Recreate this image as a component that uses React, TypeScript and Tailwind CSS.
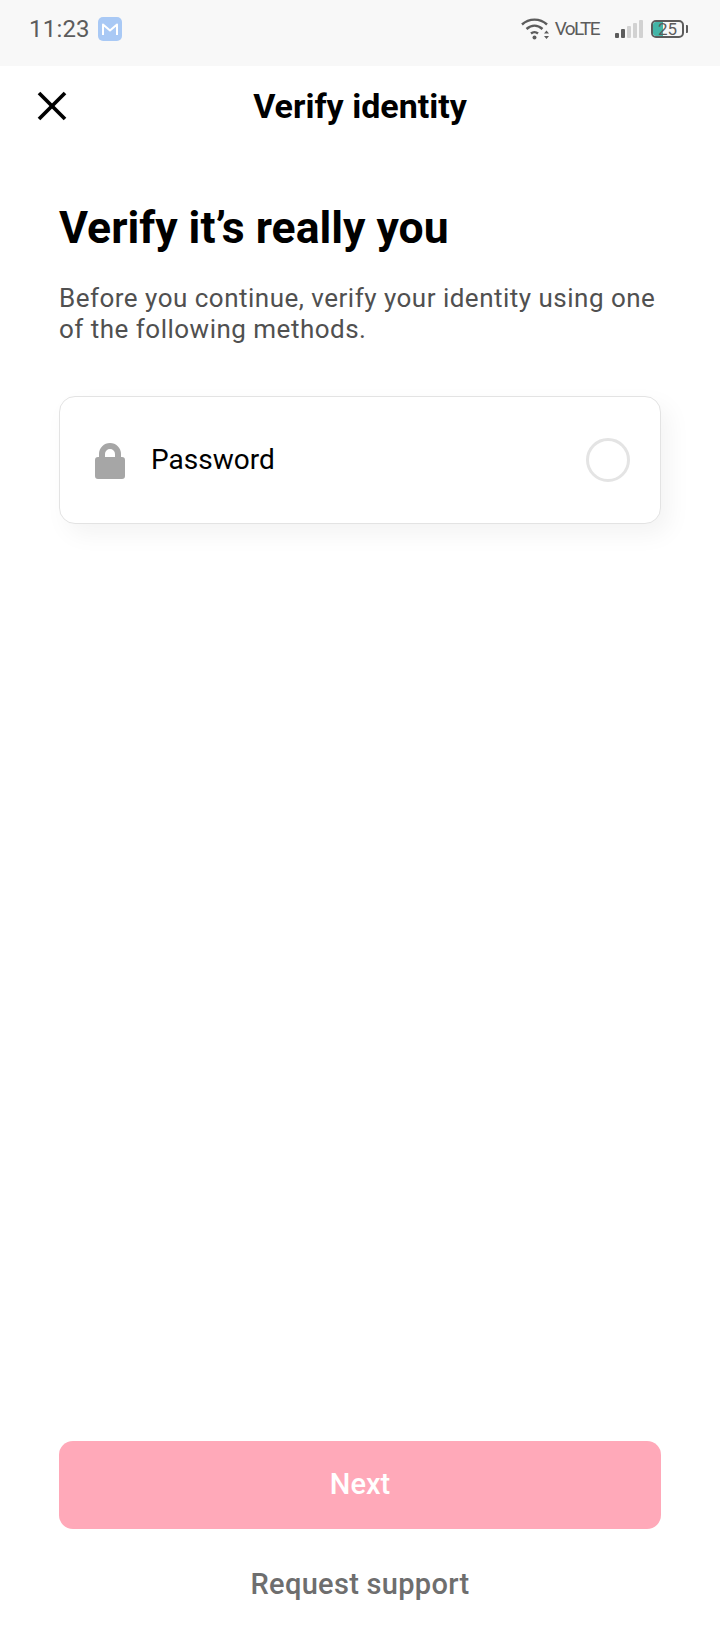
import { X } from 'lucide-react';

function StatusBar() {
  return (
    <div className="flex h-[66px] items-start justify-between bg-[#f8f8f8] pl-[29px] pr-[32px] pt-[15px]">
      <div className="flex items-center gap-[8px]">
        <span className="text-[24px] leading-[28px] tracking-[0.2px] text-[#5c5c5c]">11:23</span>
        <div className="flex h-[24px] w-[24px] items-center justify-center rounded-[5px] bg-[#a9c9f5]">
          <svg width="18" height="14" viewBox="0 0 18 14" fill="none" stroke="#ffffff" strokeWidth="2">
            <path d="M2 13V2.5L9 8.5L16 2.5V13" strokeLinejoin="round" />
          </svg>
        </div>
      </div>
      <div className="flex items-center gap-[16px] pt-[2px]">
        <div className="flex items-center gap-[6px]">
          <svg width="28" height="24" viewBox="0 0 28 24" fill="none" stroke="#5c5c5c" strokeWidth="2.4">
            <path d="M1 7.5C8 1 19 1 26 7.5" />
            <path d="M5.5 12C10.5 7.5 16.5 7.5 21.5 12" />
            <path d="M10 16.5C12 14.8 15 14.8 17 16.5" />
            <circle cx="13.5" cy="20.5" r="2" fill="#5c5c5c" stroke="none" />
            <path d="M23 16.5l2.5-3 2.5 3zM23 19l2.5 3 2.5-3z" fill="#5c5c5c" stroke="none" />
          </svg>
          <span className="text-[19px] font-normal leading-[24px] tracking-[-1.6px] text-[#5c5c5c]">VoLTE</span>
        </div>
        <div className="flex items-center gap-[8px]">
          <div className="flex h-[18px] items-end gap-[2px]">
            <div className="h-[5px] w-[4px] rounded-[1px] bg-[#5c5c5c]" />
            <div className="h-[9px] w-[4px] rounded-[1px] bg-[#5c5c5c]" />
            <div className="h-[12px] w-[4px] rounded-[1px] bg-[#d2d2d2]" />
            <div className="h-[15px] w-[4px] rounded-[1px] bg-[#d2d2d2]" />
            <div className="h-[18px] w-[4px] rounded-[1px] bg-[#d2d2d2]" />
          </div>
          <div className="flex items-center gap-[2px]">
            <div className="relative flex h-[18px] w-[33px] items-center justify-center rounded-[5px] border-2 border-[#5c5c5c]">
              <div className="absolute inset-y-0 left-0 w-[10px] rounded-l-[3px] bg-[#43b5a8]" />
              <span className="relative text-[17px] leading-[14px] text-[#5c5c5c]">25</span>
            </div>
            <div className="h-[8px] w-[2px] rounded-r-[1px] bg-[#5c5c5c]" />
          </div>
        </div>
      </div>
    </div>
  );
}

export default function App() {
  return (
    <div
      className="flex h-[1640px] w-[720px] flex-col overflow-hidden bg-white"
      style={{ fontFamily: 'Roboto, "Noto Sans", sans-serif' }}
    >
      <StatusBar />

      {/* Header */}
      <div className="grid h-[80px] grid-cols-[1fr_auto_1fr] items-center">
        <button className="ml-[26px] justify-self-start text-black">
          <X size={52} strokeWidth={1.7} strokeLinecap="butt" />
        </button>
        <h2 className="text-[34px] font-bold text-black">Verify identity</h2>
      </div>

      {/* Content */}
      <div className="flex flex-1 flex-col px-[59px]">
        <h1 className="mt-[54px] text-[44.5px] font-bold leading-[56px] text-black">Verify it’s really you</h1>
        <p className="mt-[27px] text-[26px] font-normal leading-[31px] tracking-[0.49px] text-[#505050]">
          Before you continue, verify your identity using one of the following methods.
        </p>

        <div className="mt-[51px] flex h-[128px] items-center justify-between rounded-[16px] border border-[#e3e3e3] bg-white pl-[35px] pr-[30px] shadow-[8px_10px_24px_rgba(0,0,0,0.05)]">
          <div className="flex items-center gap-[26px]">
            <svg width="30" height="37" viewBox="0 0 30 37">
              <path
                d="M4 15V12a11 11 0 0 1 22 0v3h1a3 3 0 0 1 3 3v16a3 3 0 0 1-3 3H3a3 3 0 0 1-3-3V18a3 3 0 0 1 3-3zM10 15h10V12a5 5 0 0 0-10 0z"
                fill="#a6a6a6"
                fillRule="evenodd"
              />
            </svg>
            <span className="text-[28px] text-black">Password</span>
          </div>
          <div className="h-[44px] w-[44px] rounded-full border-[3px] border-[#e4e4e4]" />
        </div>

        <div className="mt-auto flex flex-col items-center pb-[36px]">
          <button className="flex h-[88px] w-full items-center justify-center rounded-[14px] bg-[#ffa9b9] text-[29px] font-medium text-white">
            Next
          </button>
          <span className="mt-[35px] text-[29px] font-medium leading-[40px] tracking-[0.3px] text-[#6e6e6e]">Request support</span>
        </div>
      </div>
    </div>
  );
}
